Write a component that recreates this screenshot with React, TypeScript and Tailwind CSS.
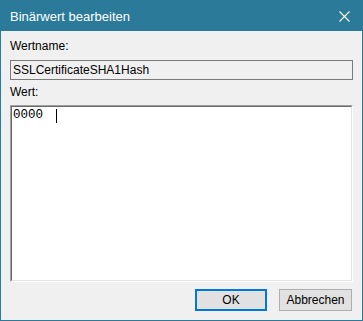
export default function App() {
  return (
    <div className="w-[363px] h-[321px] flex flex-col border border-[#2b7a99] bg-[#f0f0f0] font-['Liberation_Sans',Arial,sans-serif] text-[12px] text-black">
      {/* Title bar */}
      <div className="h-[30px] bg-[#2b7a99] flex items-center justify-between pl-[9px] pr-[12px] text-white">
        <span className="text-[13px] leading-[15px]">Binärwert bearbeiten</span>
        <svg width="11" height="11" viewBox="0 0 11 11" className="block">
          <path d="M0.5 0.5 L10.5 10.5 M10.5 0.5 L0.5 10.5" stroke="white" strokeWidth="1.1" fill="none" />
        </svg>
      </div>

      {/* Client area */}
      <div className="flex-1 flex flex-col px-[9px] pt-[8px]">
        <div className="leading-[15px] h-[15px]">Wertname:</div>
        <div className="mt-[6px] h-[20px] border border-[#7a7a7a] bg-[#f0f0f0] flex items-center pl-[2px] leading-[15px]">
          SSLCertificateSHA1Hash
        </div>
        <div className="mt-[5px] leading-[15px] h-[15px]">Wert:</div>
        <div className="mt-[5px] h-[177px] border border-t-[#a0a0a0] border-l-[#a0a0a0] border-r-white border-b-white">
          <div className="h-full border border-t-[#696969] border-l-[#696969] border-r-[#e3e3e3] border-b-[#e3e3e3] bg-white pl-[1px] pt-[1px]">
            <div className="flex items-center h-[15px] font-['Liberation_Mono','Courier_New',monospace] text-[12.5px] leading-[15px]">
              <span className="whitespace-pre">0000 </span>
              <span className="inline-block w-[1px] h-[14px] bg-black ml-[5px]" />
            </div>
          </div>
        </div>
        <div className="mt-[7px] flex justify-end gap-[12px] pr-[1px]">
          <button className="w-[72px] h-[22px] border-2 border-[#0078d7] bg-[#e1e1e1] leading-[15px]">OK</button>
          <button className="w-[73px] h-[22px] border border-[#adadad] bg-[#e1e1e1] leading-[15px]">Abbrechen</button>
        </div>
      </div>
    </div>
  );
}
